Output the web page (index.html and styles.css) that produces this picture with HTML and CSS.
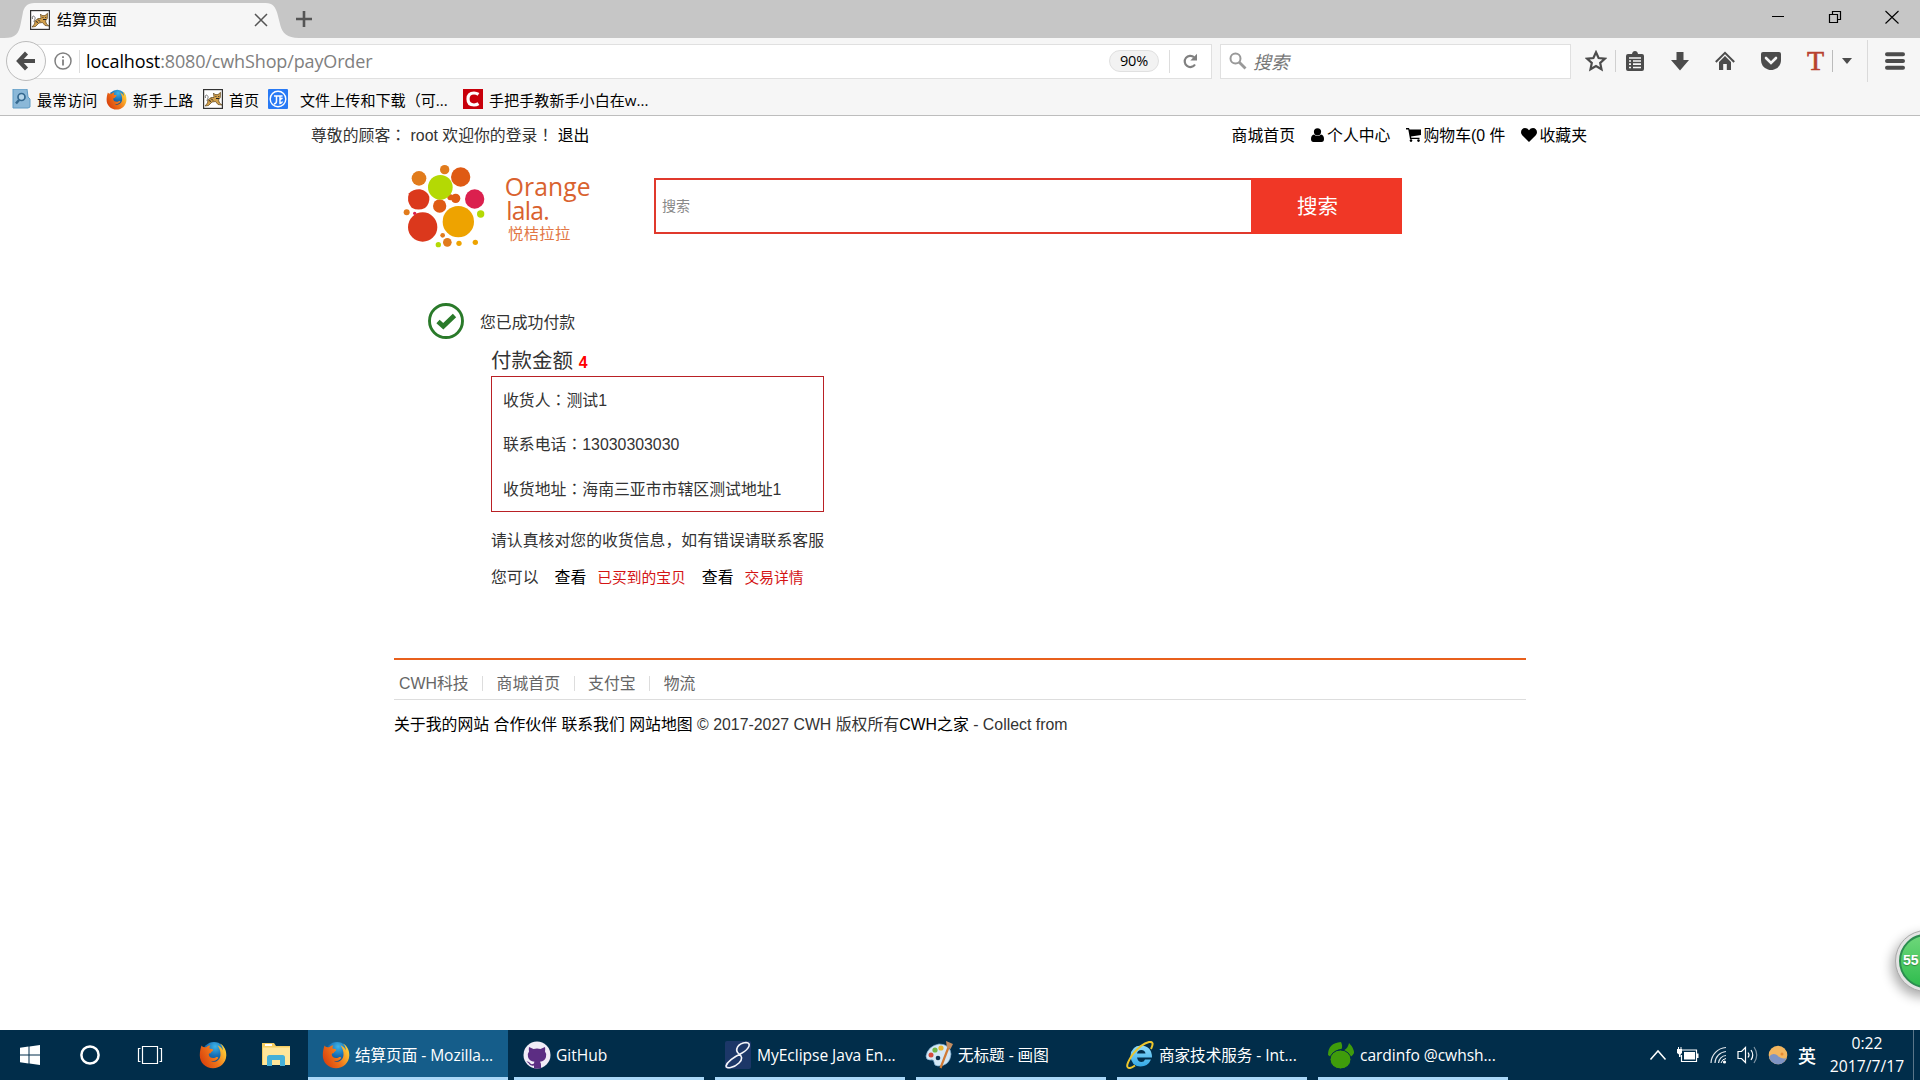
FILE: index.html
```html
<!DOCTYPE html>
<html lang="zh-CN">
<head>
<meta charset="utf-8">
<title>结算页面</title>
<link rel="stylesheet" href="styles.css">
</head>
<body>
<svg class="defs" width="0" height="0" aria-hidden="true">
  <defs>
    <radialGradient id="globe" cx="55%" cy="20%" r="75%"><stop offset="0" stop-color="#3db4e8"/><stop offset=".5" stop-color="#1872b8"/><stop offset="1" stop-color="#0a3f7d"/></radialGradient>
    <linearGradient id="fox" x1="0" y1="0.7" x2="1" y2="0.2"><stop offset="0" stop-color="#d8400c"/><stop offset=".5" stop-color="#f0761a"/><stop offset="1" stop-color="#ffd83a"/></linearGradient>
    <linearGradient id="ie" x1="0" y1="0" x2="0" y2="1"><stop offset="0" stop-color="#8fdcfb"/><stop offset="1" stop-color="#35a9e6"/></linearGradient>
    <symbol id="firefox" viewBox="0 0 28 28">
      <circle cx="15" cy="12.500" r="11.500" fill="url(#globe)"/>
      <path d="M2.500 4.500C3.500 6 5 6.300 7 6.300C8.500 5 10 4.600 11.500 4.600C10.500 5.600 10.400 6.800 10.600 7.600C12 8 14 8 14.200 9C14 10.200 12 10.500 11.600 12.200C10.500 12 9.600 12.600 9.800 14C10.300 16.600 13.500 17.800 16.500 16.500C18 15.800 19 16 19.300 16.900C17 20 14 20.300 11.500 19.700C15 22.500 21 20 21.500 14C21.700 10 20.500 7 18.500 4.200C22 5.500 23.300 8 23.800 9.500C23.900 6.500 22.800 4.200 21 2.400C25.500 5 27.500 9.500 27.300 14.500C27 22 21 27.300 14 27.300C6.500 27.300 .8 21.500 .8 14.500C.8 10.500 1.500 7.500 2.500 4.500Z" fill="url(#fox)"/>
    </symbol>
    <symbol id="tomcat" viewBox="0 0 20 20">
      <rect x=".6" y=".6" width="18.800" height="18.800" fill="#fff" stroke="#333" stroke-width="1.200"/>
      <path d="M2.500 9C1.500 6 4 5 5 7.500C5.500 9 4 10.500 4 12" fill="none" stroke="#555" stroke-width=".8"/>
      <path d="M10.500 4L12 5.600H15L17.500 3.300L17.300 8.500L15.500 11L16.500 14L19 16L15 15.500L12.500 12.500L9 13L5.500 16.500L2 17L4.500 14L5 11L8 8.500L11 8.500Z" fill="#d2a04c" stroke="#5b431b" stroke-width=".7"/>
      <path d="M12.500 7.500h.9M15.300 7.500h.9M8 9.500l2 2M6.500 11l1 2M13 9.500h3" stroke="#222" stroke-width="1"/>
    </symbol>
  </defs>
</svg>

<div class="screen">
  <header class="browser">
    <div class="titlebar">
      <div class="tab">
        <svg class="tab-shape" width="304" height="36" viewBox="0 0 304 36"><path d="M0 36C12 36 15 31 17 21L19 11C20 4 24 0 31 0H269C276 0 279 4 281 11L284 23C286 31 291 36 303 36Z" fill="#f6f6f6"/></svg>
        <svg class="favicon" width="20" height="20"><use href="#tomcat"/></svg>
        <span class="tab-title">结算页面</span>
        <svg class="tab-close" width="14" height="14" viewBox="0 0 14 14"><path d="M1 1L13 13M13 1L1 13" stroke="#555" stroke-width="1.500"/></svg>
      </div>
      <svg class="newtab" width="16" height="16" viewBox="0 0 16 16"><path d="M8 0V16M0 8H16" stroke="#555" stroke-width="2.600"/></svg>
      <div class="winctl">
        <svg width="14" height="14" viewBox="0 0 14 14"><path d="M1 6.500H13" stroke="#000"/></svg>
        <svg width="14" height="14" viewBox="0 0 14 14"><path d="M1.500 4.500H9.500V12.500H1.500ZM4.500 4V1.500H12.500V9.500H10" fill="none" stroke="#000" stroke-width="1.200"/></svg>
        <svg width="14" height="14" viewBox="0 0 14 14"><path d="M.5 1L13.500 13.500M13.500 1L.5 13.500" stroke="#000" stroke-width="1.100"/></svg>
      </div>
    </div>

    <div class="navbar">
      <button class="back" aria-label="后退"><svg width="20" height="20" viewBox="0 0 20 20"><path d="M10.500 2L3 10L10.500 18M3.500 10H19" fill="none" stroke="#4c4c4c" stroke-width="4.200"/></svg></button>
      <div class="urlbar">
        <svg width="18" height="18" viewBox="0 0 18 18"><circle cx="9" cy="9" r="8" fill="none" stroke="#808080" stroke-width="1.500"/><path d="M9 7.500V13.500M9 4.200V6" stroke="#808080" stroke-width="1.800"/></svg>
        <span class="url-sep"></span>
        <span class="url"><b>localhost</b>:8080/cwhShop/payOrder</span>
        <span class="zoom">90%</span>
        <span class="url-sep tall"></span>
        <svg class="reload" width="16" height="16" viewBox="0 0 16 16"><path d="M13 11.500A5.600 5.600 0 1 1 12 4.200" fill="none" stroke="#808080" stroke-width="2.200"/><path d="M15 .8V7.500H8.300Z" fill="#808080"/></svg>
      </div>
      <div class="searchbar">
        <svg width="18" height="18" viewBox="0 0 18 18"><circle cx="6.500" cy="6.500" r="5" fill="none" stroke="#999" stroke-width="2"/><path d="M10 10L16.500 16.500" stroke="#999" stroke-width="2.800"/></svg>
        <i>搜索</i>
      </div>
      <div class="tools">
        <svg width="22" height="22" viewBox="0 0 22 22"><path d="M11 2.300L13.600 8L19.800 8.700L15.200 12.900L16.500 19.200L11 16L5.500 19.200L6.800 12.900L2.200 8.700L8.400 8Z" fill="none" stroke="#4c4c4c" stroke-width="2.200"/></svg>
        <span class="tool-sep a"></span>
        <svg width="20" height="20" viewBox="0 0 20 20"><path d="M3 3H7Q7.500 0 10 0T13 3H17Q19 3 19 5V18Q19 20 17 20H3Q1 20 1 18V5Q1 3 3 3Z" fill="#4c4c4c"/><path d="M4 7H16M4 10H6M8 10H16M4 13.200H6M8 13.200H16M4 16.500H6M8 16.500H16" stroke="#f6f6f6" stroke-width="1.700"/></svg>
        <svg width="20" height="20" viewBox="0 0 20 20"><path d="M6.500 1H13.500V9H19L10 19.500L1 9H6.500Z" fill="#4c4c4c"/></svg>
        <svg width="20" height="20" viewBox="0 0 20 20"><path d="M.8 11L10 1.800L19.200 11" fill="none" stroke="#4c4c4c" stroke-width="2"/><path d="M4 11L10 5L16 11V19H11.800V13H8.200V19H4Z" fill="#4c4c4c"/></svg>
        <svg width="22" height="20" viewBox="0 0 22 20"><path d="M3 1H19Q21 1 21 3V9Q21 16 14 18.500Q11 19.500 8 18.500Q1 16 1 9V3Q1 1 3 1Z" fill="#4c4c4c"/><path d="M6 7L11 12L16 7" fill="none" stroke="#f6f6f6" stroke-width="2.600" stroke-linecap="round"/></svg>
        <span class="tool-t">T</span>
        <span class="tool-sep b"></span>
        <svg class="caret" width="10" height="6" viewBox="0 0 10 6"><path d="M0 0H10L5 6Z" fill="#4c4c4c"/></svg>
        <span class="tool-sep c"></span>
        <svg class="menu" width="20" height="18" viewBox="0 0 20 18"><path d="M2 2.200H18M2 9H18M2 15.800H18" stroke="#4c4c4c" stroke-width="4" stroke-linecap="round"/></svg>
      </div>
    </div>

    <nav class="bookmarks">
      <a class="bm1"><svg width="20" height="20" viewBox="0 0 20 20"><path d="M2 0H16L17 8L19 10V18L17 19H2Z" fill="#8bb8d8" stroke="#5f9bc5"/><circle cx="10.500" cy="8" r="3.500" fill="#b5d5ea" stroke="#34688f" stroke-width="1.700"/><path d="M8 11L5 14.500" stroke="#34688f" stroke-width="2.500"/></svg>最常访问</a>
      <a class="bm2"><svg width="21" height="21"><use href="#firefox"/></svg>新手上路</a>
      <a class="bm3"><svg width="20" height="20"><use href="#tomcat"/></svg>首页</a>
      <a class="bm4"><svg width="20" height="20" viewBox="0 0 20 20"><rect width="20" height="20" rx="1" fill="#287af5"/><circle cx="10" cy="10" r="7.800" fill="none" stroke="#fff" stroke-width="1.400"/><path d="M6 7H14.500M8.500 7V12Q8.500 14.500 6 15M12 7V14.500Q13.500 14.500 14.500 12.500M12 10.500L14.500 9" fill="none" stroke="#fff" stroke-width="1.500"/></svg>文件上传和下载（可...</a>
      <a class="bm5"><svg width="20" height="20" viewBox="0 0 20 20"><rect width="20" height="20" fill="#c8000b"/><path d="M15.500 5.300Q13.500 4 11 4Q5 4 5 10T11 16Q13.500 16 15.500 14.700" fill="none" stroke="#fff" stroke-width="3.200"/></svg>手把手教新手小白在w...</a>
    </nav>
  </header>

  <main class="page">
    <div class="topline">
      <p class="hello">尊敬的顾客<span class="punct" lang="zh-TW">：</span> root 欢迎你的登录<span class="punct" lang="zh-TW">！</span> <a>退出</a></p>
      <ul class="toplinks">
        <li>商城首页</li>
        <li><svg class="i-user" width="13" height="14" viewBox="0 0 13 14"><circle cx="6.500" cy="3.800" r="3.600"/><path d="M3 6.500Q0 7 0 11Q0 14 2.500 14H10.500Q13 14 13 11Q13 7 10 6.500Q6.500 9.500 3 6.500Z"/></svg>个人中心</li>
        <li><svg class="i-cart" width="15" height="14" viewBox="0 0 15 14"><path d="M0 0H3L3.500 1.500H15V7L5 8.500L5.300 9.700H13.500V11H4L2.300 1.500H0Z"/><circle cx="5" cy="12.600" r="1.300"/><circle cx="12.500" cy="12.600" r="1.300"/></svg>购物车(0 件</li>
        <li><svg class="i-heart" width="16" height="14" viewBox="0 0 16 14"><path d="M8 14L1.200 7.300C-1.500 4 .8 0 4 0Q6.500 0 8 2.200Q9.500 0 12 0C15.200 0 17.500 4 14.800 7.300Z"/></svg>收藏夹</li>
      </ul>
    </div>

    <div class="brandbar">
      <svg class="logo" width="200" height="90" viewBox="300 135 600 270">
        <g fill="#e17b1c"><circle cx="357" cy="190" r="22"/><circle cx="434" cy="164" r="14"/><circle cx="320" cy="292" r="9"/><circle cx="428" cy="361" r="7"/><circle cx="442" cy="382" r="13"/></g>
        <g fill="#df5a14"><circle cx="482" cy="186" r="29"/><circle cx="419" cy="273" r="20"/><circle cx="467" cy="250" r="14"/><circle cx="451" cy="247" r="9"/></g>
        <g fill="#b4d904"><circle cx="421" cy="217" r="37"/><circle cx="542" cy="297" r="11"/><circle cx="415" cy="389" r="8"/></g>
        <g fill="#db381c"><path d="M327 235Q340 222 360 223Q382 228 388 245Q390 266 375 279Q355 289 335 278Q318 260 327 235Z"/><circle cx="368" cy="336" r="44"/></g>
        <g fill="#db204e"><circle cx="524" cy="252" r="29"/><circle cx="344" cy="295" r="5"/></g>
        <g fill="#eea300"><circle cx="475" cy="320" r="47"/><circle cx="477" cy="385" r="8"/><circle cx="526" cy="382" r="8"/></g>
        <g class="logo-latin" fill="#d9622f"><text x="614" y="244" textLength="258">Orange</text><text x="619" y="314" textLength="130">lala.</text></g>
        <text class="logo-cjk" x="624" y="373" textLength="187" fill="#e27746">悦桔拉拉</text>
      </svg>
      <form class="search">
        <input type="text" placeholder="搜索">
        <button type="button">搜索</button>
      </form>
    </div>

    <section class="result">
      <div class="paid">
        <svg width="36" height="36" viewBox="0 0 36 36"><circle cx="18" cy="18" r="16.500" fill="none" stroke="#2a7a2a" stroke-width="2.900"/><path d="M10 18.500L15.300 23.300L26.500 12.500" fill="none" stroke="#2a7a2a" stroke-width="4.800"/></svg>
        <span>您已成功付款</span>
      </div>
      <div class="detail">
        <h2>付款金额 <em>4</em></h2>
        <ul class="address">
          <li>收货人<span class="punct" lang="zh-TW">：</span>测试1</li>
          <li>联系电话<span class="punct" lang="zh-TW">：</span>13030303030</li>
          <li>收货地址<span class="punct" lang="zh-TW">：</span>海南三亚市市辖区测试地址1</li>
        </ul>
        <p class="check">请认真核对您的收货信息，如有错误请联系客服</p>
        <p class="next">您可以<a class="see">查看</a><a class="red r1">已买到的宝贝</a><a class="see">查看</a><a class="red">交易详情</a></p>
      </div>
    </section>

    <footer class="foot">
      <div class="friends"><a>CWH科技</a><a>商城首页</a><a>支付宝</a><a>物流</a></div>
      <p><a>关于我的网站</a> <a>合作伙伴</a> <a>联系我们</a> <a>网站地图</a> © 2017-2027 CWH 版权所有<a>CWH之家</a> - Collect from</p>
    </footer>
    <div class="bubble"><span>55</span></div>
  </main>

  <footer class="taskbar">
    <div class="pinned">
      <svg width="20" height="20" viewBox="0 0 20 20"><path d="M0 2.800L8.500 1.600V9.500H0ZM9.500 1.500L20 0V9.500H9.500ZM0 10.500H8.500V18.400L0 17.200ZM9.500 10.500H20V20L9.500 18.500Z" fill="#fff"/></svg>
      <svg width="20" height="20" viewBox="0 0 20 20"><circle cx="10" cy="10" r="8.600" fill="none" stroke="#fff" stroke-width="2.500"/></svg>
      <svg width="26" height="20" viewBox="0 0 26 20"><path d="M5.500 1.500H20.500V18.500H5.500ZM3.500 3.500H1.500V16.500H3.500M22.500 3.500H24.500V16.500H22.500" fill="none" stroke="#fff" stroke-width="1.200"/></svg>
      <svg width="28" height="28"><use href="#firefox"/></svg>
      <svg width="28" height="24" viewBox="0 0 28 24"><path d="M0 0H12L14 3H28V22H0Z" fill="#f5cd61"/><path d="M1 4.500H28V22H1Z" fill="#ffe69a"/><rect x="3" y="1" width="7" height="2" fill="#fff"/><path d="M5 23V14.500Q5 12 7.500 12H20.500Q23 12 23 14.500V23H18V17H10V23Z" fill="#45b0d8"/></svg>
    </div>
    <div class="tasks">
      <div class="task active"><svg width="28" height="28"><use href="#firefox"/></svg><span>结算页面 - Mozilla...</span></div>
      <div class="task"><svg width="28" height="28" viewBox="0 0 28 28"><circle cx="14" cy="14" r="13.500" fill="#f1ecf7"/><path d="M6 6L10.500 8Q14 7 17.500 8L22 6Q22.500 8.500 22 10.500Q24 13 23 16Q22 20 17 20.700Q18 22 18 24V27.500H11V24.500Q7 25.500 5.500 22L3.500 20.500Q6 20 7 22T11 22.500Q11 21.500 11.500 20.700Q6 20 5 16Q4 13 6 10.500Q5.500 8.500 6 6Z" fill="#5c2d83"/></svg><span>GitHub</span></div>
      <div class="task"><svg width="28" height="28" viewBox="0 0 28 28"><rect x="1" width="26" height="28" rx="2" fill="#1c3768"/><path d="M15 13C10 9 14 2 22 1.500C28 2 25 8 18 12C10 16 3 20 2 25C2 28 10 27 15 22C19 18 18 15 15 13Z" fill="none" stroke="#f3f5fa" stroke-width="1.600"/></svg><span>MyEclipse Java En...</span></div>
      <div class="task"><svg width="28" height="28" viewBox="0 0 28 28"><path d="M14 3Q25 3 26 13Q25 25 13 25Q9 25 9 21Q9 18 5 19Q1 19 1 15Q3 5 14 3Z" fill="#d5e8f5" stroke="#7dadd0" stroke-width=".7"/><circle cx="6" cy="14" r="2.500" fill="#d54a3c"/><circle cx="10" cy="9" r="2.600" fill="#71b548"/><circle cx="16" cy="7" r="2.600" fill="#e8b62d"/><circle cx="13" cy="17" r="2.300" fill="#0d3352"/><path d="M24 5L15.500 27" stroke="#d17a35" stroke-width="2.200"/><path d="M21 0L28 3L25.500 8L22 7Z" fill="#c48d61"/></svg><span>无标题 - 画图</span></div>
      <div class="task"><svg width="28" height="28" viewBox="0 0 28 28"><path d="M25 18.500Q22 25.500 14.500 25.500Q5 25 4.500 15Q5 5 15 4.500Q26 5 26 16.500H11Q12 21 15.500 21Q18 21 19 18.500ZM11 12.500H19.500Q19 9 15.300 9T11 12.500Z" fill="url(#ie)"/><path d="M25 8Q29 0 23 1Q15 3 7 13Q-2 26 3 27Q5 27.500 9 24.500" fill="none" stroke="#edc62d" stroke-width="2"/></svg><span>商家技术服务 - Int...</span></div>
      <div class="task"><svg width="28" height="28" viewBox="0 0 28 28"><g fill="#3f9c0b"><path d="M1 14Q1 2 14 1Q16 5 14.500 8Q8 8 4 16Z"/><path d="M22 2Q27 7 27 12Q25 16 22 16Q18 14 17.500 9Q21 7 22 2Z"/><ellipse cx="13.500" cy="18.500" rx="10.500" ry="9.500" stroke="#012d4a"/></g></svg><span>cardinfo @cwhsh...</span></div>
    </div>
    <div class="tray">
      <svg width="18" height="12" viewBox="0 0 18 12"><path d="M1.500 10.500L9 2L16.500 10.500" fill="none" stroke="#fff" stroke-width="1.500"/></svg>
      <svg width="22" height="16" viewBox="0 0 22 16"><path d="M4 3H19.500V14.500H4.500V8" fill="none" stroke="#fff" stroke-width="1.200"/><path d="M7 5H18V12.500H7ZM20 6.500H21.500V11H20ZM0 2H5V6L3.500 7.500V10H2V7.500L0 6ZM1 0H2V2H1ZM3.500 0H4.500V2H3.500Z" fill="#fff"/></svg>
      <svg width="18" height="18" viewBox="0 0 18 18"><path d="M1 17A16 16 0 0 1 16 1.500M5 17A12 12 0 0 1 16 5.500M8.500 17A8 8 0 0 1 16 9.500" fill="none" stroke="#dfe6ec" stroke-width="1.200"/><path d="M11 17Q12 13 16 12.500" fill="none" stroke="#fff"/><circle cx="14.500" cy="16" r="1.600" fill="#fff"/></svg>
      <svg width="22" height="20" viewBox="0 0 22 20"><path d="M1 6.500H4.500L8.500 2.500V17.500L4.500 13.500H1Z" fill="none" stroke="#fff" stroke-width="1.200"/><path d="M11 7.500Q13 10 11 12.500M14 5Q17.500 10 14 15" fill="none" stroke="#fff" stroke-width="1.200"/><path d="M17 2Q22.500 10 17 18" fill="none" stroke="#8296a6" stroke-width="1.200"/></svg>
      <svg width="20" height="20" viewBox="0 0 20 20"><circle cx="10" cy="10" r="9.300" fill="#f3b65f"/><path d="M1 12Q4 7 9 10Q13 15 18.500 13Q16 19.300 10 19.300Q3 19 1 12Z" fill="#7f94c4"/><circle cx="14" cy="9" r="1.500" fill="#e78a32"/></svg>
      <span class="ime">英</span>
      <div class="clock"><span>0:22</span><span>2017/7/17</span></div>
      <span class="peek"></span>
    </div>
  </footer>
</div>
</body>
</html>
```

FILE: styles.css
```css
* { box-sizing: border-box; }
body { margin: 0; overflow: hidden; background: #fff; }
ul, p, h2 { margin: 0; padding: 0; list-style: none; }
svg { display: block; flex: none; }
.defs { position: absolute; }
button, input { font: inherit; border: 0; padding: 0; }

.screen {
  width: 1920px;
  height: 1080px;
  display: flex;
  flex-direction: column;
  font-family: "Open Sans", "Noto Sans CJK SC", sans-serif;
  white-space: nowrap;
}

/* Browser chrome */
.browser { height: 116px; background: #f6f6f6; border-bottom: 1px solid #bdbdbd; color: #000; }
.titlebar { height: 38px; background: #c6c6c6; display: flex; align-items: flex-start; }
.tab { position: relative; width: 296px; height: 38px; padding: 2px 28px 0 30px; display: flex; align-items: center; }
.tab-shape { position: absolute; left: 0; top: 3px; height: 35px; }
.favicon, .tab-title, .tab-close { position: relative; }
.tab-title { margin: -3px 0 0 7px; font-size: 15px; flex: 1; }
.newtab { margin-top: 11px; }
.winctl { margin: 10px 21px 0 auto; display: flex; gap: 43px; }

.navbar { height: 46px; display: flex; align-items: center; padding-left: 6px; }
.back { width: 40px; height: 40px; border-radius: 50%; border: 1px solid #bcbcbc; background: #f9f9f9; display: grid; place-items: center; position: relative; z-index: 1; }
.urlbar { width: 1186px; height: 35px; margin-left: -20px; padding: 0 13px 0 27px; background: #fff; border: 1px solid #e0e0e0; display: flex; align-items: center; }
.url-sep { width: 1px; height: 23px; background: #ddd; margin: 0 6px 0 7px; }
.url-sep.tall { margin: 0 12px 0 10px; }
.url { flex: 1; color: #808080; font-size: 18px; letter-spacing: -.14px; }
.url b { color: #000; font-weight: 400; }
.zoom { width: 50px; height: 22px; border: 1px solid #e0e0e0; border-radius: 11px; background: #f2f2f2; font-size: 14.500px; letter-spacing: -.2px; line-height: 20px; text-align: center; }
.searchbar { width: 351px; height: 35px; margin-left: 8px; padding-left: 8px; background: #fff; border: 1px solid #e0e0e0; display: flex; align-items: center; gap: 6px; color: #777; font-size: 18px; }
.tools { flex: 1; display: flex; align-items: center; padding-left: 14px; gap: 25px; }
.tool-sep { width: 1px; height: 22px; background: #d0d0d0; }
.tool-sep.a { margin: 0 -16px 0 -17px; }
.tool-sep.b { margin: 0 -16px 0 -16px; background: #bbb; }
.tool-sep.c { height: 42px; background: #dadada; margin: 0 -8px 0 -10px; }
.tool-t { width: 16px; font: 400 28px/30px "Liberation Serif", serif; color: #b8412f; text-align: center; -webkit-text-stroke: .6px #b8412f; }

.bookmarks { height: 30px; display: flex; align-items: center; padding-left: 11px; font-size: 15.100px; }
.bookmarks a { display: flex; align-items: center; gap: 6px; }
.bm1 { width: 95px; }
.bm2 { width: 97px; }
.bm3 { width: 65px; }
.bookmarks .bm4 { width: 195px; gap: 12px; }

/* Shop page */
.page { position: relative; height: 914px; overflow: hidden; font-family: "Liberation Sans", "Noto Sans CJK SC", sans-serif; font-size: 15.860px; color: #333; }
.page a { color: #000; }
.punct { font-family: "Noto Sans CJK TC", sans-serif; line-height: 1; }
.topline { height: 38px; padding: 0 333px 2px 311px; display: flex; justify-content: space-between; align-items: center; }
.toplinks { display: flex; gap: 16px; color: #000; }
.toplinks li { display: flex; align-items: center; gap: 3px; }
.toplinks svg { margin-top: 2px; }
.toplinks .i-cart, .toplinks .i-heart { margin-right: -1px; }

.brandbar { height: 96px; padding: 6px 0 0 400px; display: flex; align-items: flex-start; }
.logo-latin { font: 74px "Open Sans", sans-serif; }
.logo-cjk { font: 46px "Noto Sans CJK SC", sans-serif; }
.search { width: 748px; height: 56px; margin: 18px 0 0 54px; display: flex; }
.search input { width: 597px; border: 2px solid #e0392c; border-right: 0; padding-left: 6px; font-size: 14px; background: #fff; }
.search input::placeholder { color: #888; opacity: 1; }
.search button { flex: 1; background: #f03726; color: #fff; font-size: 20.500px; text-align: left; padding-left: 46px; padding-bottom: 2px; }

.result { padding: 53px 0 0 428px; height: 408px; }
.paid { display: flex; gap: 16px; align-items: center; height: 36px; }
.detail { padding-left: 63px; }
.detail h2 { height: 37px; padding-top: 7px; font-weight: 400; font-size: 20.500px; line-height: 30px; }
.detail em { font: 700 15.800px "Liberation Sans", sans-serif; color: #f00; }
.address { width: 333px; height: 136px; border: 1px solid #b92025; padding: 2px 0 0 11px; line-height: 44px; }
.address li { height: 44.400px; }
.check { line-height: 26px; margin-top: 16px; }
.next { display: flex; align-items: center; height: 26px; margin-top: 9px; }
.next .see { margin-left: 16px; }
.next .red { margin-left: 11px; font-size: 14.750px; color: #d41414; }

.foot { margin: 0 394px; }
.friends { height: 42px; border-top: 2px solid #e8601c; border-bottom: 1px solid #ddd; padding: 8px 0 0 5px; display: flex; align-items: center; }
.page .friends a { color: #666; line-height: 15px; padding-right: 13.500px; margin-right: 13.500px; border-right: 1px solid #ddd; }
.page .friends a:last-child { border-right: 0; }
.foot p { line-height: 26px; margin-top: 12px; }

.bubble { position: absolute; left: 1895px; top: 814px; width: 62px; height: 62px; border-radius: 50%; background: #e3e3e3; border: 1px solid #aaa; padding: 3px; box-shadow: -3px 5px 12px #0005; }
.bubble span { display: block; height: 54px; border-radius: 50%; border: 2px solid #2c8d50; background: linear-gradient(#6ed77a, #2fbc4e); font: 700 14px/48px "Liberation Sans", sans-serif; color: #fff; padding-left: 2px; text-shadow: 0 1px 1px #0005; }

/* Taskbar */
.taskbar { height: 50px; background: #012d4a; color: #fff; display: flex; }
.pinned { width: 308px; padding-left: 20px; display: flex; align-items: center; }
.pinned svg:nth-child(2) { margin-left: 40px; }
.pinned svg:nth-child(3) { margin-left: 37px; }
.pinned svg:nth-child(4) { margin-left: 36px; }
.pinned svg:nth-child(5) { margin-left: 35px; }
.tasks { display: flex; gap: 11px; }
.task { width: 190px; display: flex; align-items: center; gap: 5px; padding-left: 9px; border-bottom: 3px solid #aad8f8; border-top: 3px solid transparent; font-size: 15.600px; letter-spacing: -.05px; }
.task span { margin-top: -1px; }
.task.active { width: 200px; margin-right: -5px; padding-left: 14px; background: #155d8a; border-top-color: #155d8a; }
.tray { flex: 1; display: flex; align-items: center; padding-left: 141px; }
.tray svg:nth-child(2) { margin-left: 10px; }
.tray svg:nth-child(3) { margin-left: 11px; }
.tray svg:nth-child(4) { margin-left: 9px; }
.tray svg:nth-child(5) { margin-left: 9px; }
.ime { margin-left: 10px; font-size: 18px; font-weight: 500; }
.clock { width: 98px; margin: 0 -2px 0 1px; padding-left: 2px; display: flex; flex-direction: column; align-items: center; font-size: 15.700px; line-height: 23px; }
.peek { width: 1px; height: 50px; background: #5a7589; }
```
